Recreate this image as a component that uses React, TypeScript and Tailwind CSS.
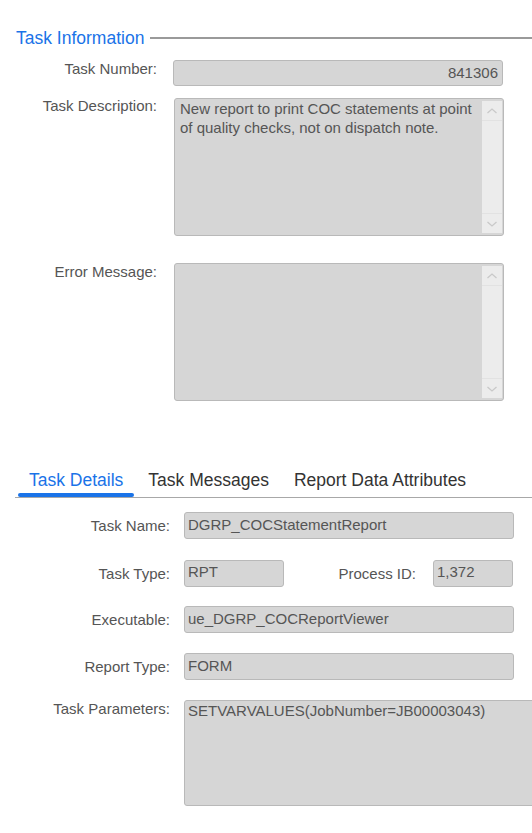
import React from 'react';

const ScrollBar = () => (
  <div className="w-[20px] my-[2px] mr-[1px] bg-[#ececec] flex flex-col justify-between">
    <div className="h-[20px] flex items-center justify-center border-b border-[#e2e2e2]">
      <svg width="12" height="8" viewBox="0 0 12 8" fill="none">
        <path d="M1.5 6L6 2l4.5 4" stroke="#c9c9c9" strokeWidth="1.3" />
      </svg>
    </div>
    <div className="h-[20px] flex items-center justify-center border-t border-[#e2e2e2]">
      <svg width="12" height="8" viewBox="0 0 12 8" fill="none">
        <path d="M1.5 2L6 6l4.5-4" stroke="#c9c9c9" strokeWidth="1.3" />
      </svg>
    </div>
  </div>
);

const Box = ({ className = '', children }: { className?: string; children?: React.ReactNode }) => (
  <div className={`bg-[#d6d6d6] border border-[#b9b9b9] rounded-[3px] text-[#555] text-[15px] ${className}`}>
    {children}
  </div>
);

const Tab = ({ label, active }: { label: string; active?: boolean }) => (
  <div className="flex flex-col">
    <span className={`px-[11px] text-[17.5px] leading-[22px] ${active ? 'text-[#1a73e8]' : 'text-[#333]'}`}>{label}</span>
    <div className={`mt-[2px] h-[4px] rounded-full ${active ? 'bg-[#1a73e8]' : 'bg-transparent'}`} />
  </div>
);

const App: React.FC = () => {
  return (
    <div className="w-[532px] h-[833px] overflow-hidden bg-white font-['Liberation_Sans',Arial,sans-serif] text-[15px] text-[#555]">
      {/* Task Information */}
      <div className="pt-[27px] pl-[16px] flex items-center">
        <span className="text-[17.5px] leading-[22px] text-[#1a73e8]">Task Information</span>
        <div className="flex-1 h-[2px] bg-[#9a9a9a] ml-[6px]" />
      </div>

      <div className="mt-[11px] flex items-start gap-[16px]">
        <label className="w-[157px] text-right leading-[16px] pt-[1px]">Task Number:</label>
        <Box className="w-[330px] h-[26px] flex items-center justify-end pr-[4px]">841306</Box>
      </div>

      <div className="mt-[12px] flex items-start gap-[16px]">
        <label className="w-[157px] text-right leading-[16px]">Task Description:</label>
        <Box className="ml-[1px] w-[330px] h-[138px] flex">
          <div className="flex-1 pl-[5px] pr-[6px] leading-[19px]">
            New report to print COC statements at point of quality checks, not on dispatch note.
          </div>
          <ScrollBar />
        </Box>
      </div>

      <div className="mt-[27px] flex items-start gap-[16px]">
        <label className="w-[157px] text-right leading-[16px] pt-[1px]">Error Message:</label>
        <Box className="ml-[1px] w-[330px] h-[138px] flex">
          <div className="flex-1" />
          <ScrollBar />
        </Box>
      </div>

      {/* Tabs */}
      <div className="mt-[68px] ml-[15px] pl-[3px] flex gap-[3px] border-b border-[#a8a8a8]">
        <Tab label="Task Details" active />
        <Tab label="Task Messages" />
        <Tab label="Report Data Attributes" />
      </div>

      <div className="mt-[14px] flex items-center gap-[14px]">
        <label className="w-[170px] text-right leading-[16px]">Task Name:</label>
        <Box className="w-[330px] h-[27px] flex items-center pl-[3px]">DGRP_COCStatementReport</Box>
      </div>

      <div className="mt-[21px] flex items-center">
        <label className="w-[170px] text-right leading-[16px] mr-[14px]">Task Type:</label>
        <Box className="w-[100px] h-[27px] flex items-center pl-[3px] pb-[2px]">RPT</Box>
        <label className="w-[132px] text-right leading-[16px]">Process ID:</label>
        <Box className="ml-[17px] w-[80px] h-[27px] flex items-center pl-[3px] pb-[2px]">1,372</Box>
      </div>

      <div className="mt-[19px] flex items-center gap-[14px]">
        <label className="w-[170px] text-right leading-[16px]">Executable:</label>
        <Box className="w-[330px] h-[27px] flex items-center pl-[3px]">ue_DGRP_COCReportViewer</Box>
      </div>

      <div className="mt-[20px] flex items-center gap-[14px]">
        <label className="w-[170px] text-right leading-[16px]">Report Type:</label>
        <Box className="w-[330px] h-[27px] flex items-center pl-[3px]">FORM</Box>
      </div>

      <div className="mt-[20px] flex items-start gap-[14px]">
        <label className="w-[170px] shrink-0 text-right leading-[16px] pt-[1px]">Task Parameters:</label>
        <Box className="w-[370px] shrink-0 h-[106px] pl-[3px] leading-[19px]">SETVARVALUES(JobNumber=JB00003043)</Box>
      </div>
    </div>
  );
};

export default App;
